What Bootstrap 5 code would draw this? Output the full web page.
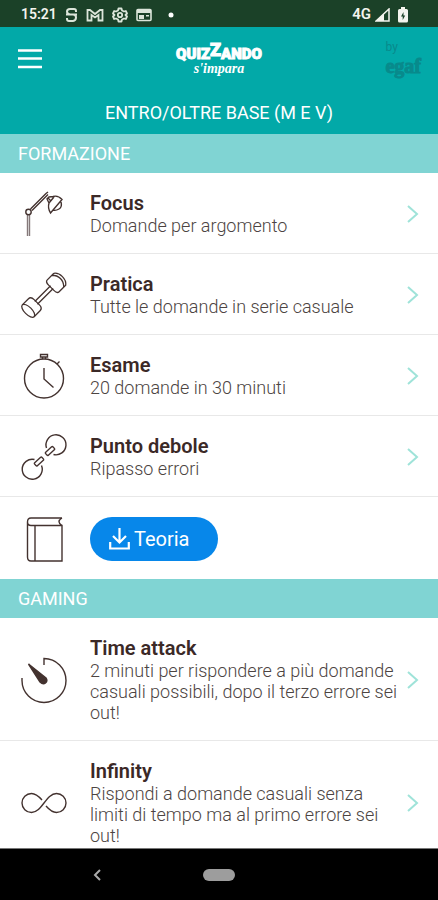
<!DOCTYPE html>
<html lang="it">
<head>
<meta charset="utf-8">
<meta name="viewport" content="width=device-width, initial-scale=1">
<title>Quizzando</title>
<link href="https://cdn.jsdelivr.net/npm/bootstrap@5.3.0/dist/css/bootstrap.min.css" rel="stylesheet">
<style>
  body { font-family: Roboto, "Liberation Sans", sans-serif; background: #fff; }
  svg { display: block; flex: none; }
  .status-bar { background: #1b4128; color: #f4f4ee; height: 27px; padding: 2px 30px 0 21px; font-size: 15px; font-weight: 600; }
  .clock { font-size: 14px; }
  .app-header { background: #02a9a8; color: #fff; }
  .header-row { display: grid; grid-template-columns: 1fr auto 1fr; height: 64px; padding: 0 17px; }
  .brand { line-height: 1; font-weight: 900; }
  .brand-name { line-height: 18px; -webkit-text-stroke: 1px #fff; font-size: 15px; }
  .brand-name .big-z { font-size: 18px; position: relative; top: -3px; }
  .brand-sub { font: italic bold 14px/12px "Liberation Serif", serif; }
  .publisher { color: #088a8c; }
  .publisher-by { font-size: 12px; line-height: 14px; }
  .publisher-name { font: bold 20px/24px "Liberation Serif", serif; -webkit-text-stroke: 1px #088a8c; }
  .course { font-size: 18px; line-height: 21px; font-weight: 400; padding: 11px 0; }
  .section-title { background: #80d4d3; color: #fff; font-size: 18px; line-height: 21px; font-weight: 400; padding: 9px 18px; }
  .menu-list .list-group-item { padding: 18px 18px 17px 20px; border-color: #e8e8e8; background: #fff; }
  .menu-list .list-group-item.no-arrow { padding-top: 20px; padding-bottom: 18px; }
  .menu-icon { width: 48px; height: 48px; fill: none; stroke: #43322f; stroke-width: 1.4; margin: -3px 22px -3px 0; }
  .item-title { color: #3b2927; font-size: 20px; line-height: 24px; font-weight: 600; }
  .item-text { color: #4c4442; font-size: 18px; line-height: 21px; font-weight: 300; }
  .item-body { margin-right: 4px; min-width: 0; }
  .arrow { stroke: #9fe3d9; stroke-width: 2; fill: none; }
  .btn-theory { background: #0787ea; color: #fff; font-size: 20px; line-height: 24px; padding: 10px 28px 10px 19px; }
  .btn-theory:hover { background: #0679d2; color: #fff; }
  .system-nav { background: #000; height: 52px; display: grid; grid-template-columns: 1fr auto 1fr; border-top: 1px solid #777; }
  .back-button { margin-right: 97px; }
  .home-pill { width: 32px; height: 12px; border-radius: 6px; background: #9d9d9d; }
</style>
<script src="https://cdn.jsdelivr.net/npm/bootstrap@5.3.0/dist/js/bootstrap.bundle.min.js"></script>
</head>
<body class="d-flex flex-column vh-100 overflow-hidden">

<div class="status-bar d-flex align-items-center flex-shrink-0">
  <span class="clock">15:21</span>
  <svg class="ms-2" width="13" height="16" viewBox="0 0 13 16" fill="none" stroke="#dce5da" stroke-width="2"><path d="M11 5V4Q11 2 9 2H5Q2 2 2 4.500T5 7.500H8Q11 7.500 11 10.500T8 14H4Q2 14 2 12V11M1 7.500H12"/></svg>
  <svg class="ms-2 me-1" width="18" height="14" viewBox="0 0 18 14" fill="none" stroke="#dce5da" stroke-width="1.800"><path d="M1.500 12.500V2H4L9 6L14 2H16.500V12.500H12.500V7L9 9.500L5.500 7V12.500Z"/></svg>
  <svg class="ms-1" width="16" height="16" viewBox="0 0 16 16" fill="none" stroke="#dce5da"><path stroke-width="1.800" stroke-linejoin="round" d="M6.500 1.500H9.500L10 3.500L12 4.500L13.800 4L15 6.500L13.500 8L15 9.500L13.800 12L12 11.500L10 12.500L9.500 14.500H6.500L6 12.500L4 11.500L2.200 12L1 9.500L2.500 8L1 6.500L2.200 4L4 4.500L6 3.500Z"/><circle cx="8" cy="8" r="2.200" stroke-width="1.800"/></svg>
  <svg class="ms-2" width="16" height="14" viewBox="0 0 16 14"><rect x="1" y="1.500" width="14" height="11" rx="1" fill="none" stroke="#dce5da" stroke-width="1.600"/><path fill="#dce5da" d="M1 1H15V5H1ZM3 7H8V11H3ZM10 7H13V8.500H10Z"/></svg>
  <svg class="ms-3" width="6" height="6" viewBox="0 0 6 6"><circle cx="3" cy="3" r="2.500" fill="#fff"/></svg>
  <span class="ms-auto">4G</span>
  <svg class="ms-1" width="15" height="14" viewBox="0 0 15 14"><path d="M14 1V13H1Z" fill="none" stroke="#f4f4ee" stroke-width="1.500"/><path d="M9 5.500V13H1Z" fill="#f4f4ee"/></svg>
  <svg class="ms-2" width="10" height="16" viewBox="0 0 10 16"><path fill="#f4f4ee" d="M3 0H7V2H8.500Q10 2 10 3.500V14Q10 15.500 8.500 15.500H1.500Q0 15.500 0 14V3.500Q0 2 1.500 2H3Z"/><path fill="#1b4128" d="M5.500 5L3 9.500H4.700V13L7.200 8.500H5.500Z"/></svg>
</div>

<header class="app-header flex-shrink-0">
  <div class="header-row align-items-center">
    <button type="button" class="btn border-0 p-0 text-start" aria-label="Menu">
      <svg width="26" height="22" viewBox="0 0 26 22" stroke="#fff" stroke-width="2.600"><path d="M1 2.500H25M1 10.500H25M1 19H25"/></svg>
    </button>
    <div class="brand text-center">
      <div class="brand-name">QUIZ<span class="big-z">Z</span>ANDO</div>
      <div class="brand-sub">s'impara</div>
    </div>
    <div class="publisher ms-auto">
      <div class="publisher-by">by</div>
      <div class="publisher-name">egaf</div>
    </div>
  </div>
  <h1 class="course text-center m-0">ENTRO/OLTRE BASE (M E V)</h1>
</header>

<main class="flex-grow-1 overflow-hidden">
  <h2 class="section-title m-0">FORMAZIONE</h2>
  <div class="menu-list list-group list-group-flush">
    <a href="#focus" class="list-group-item d-flex align-items-center">
      <svg class="menu-icon" viewBox="0 0 48 48"><path stroke="#85797a" d="M7.500 25V46M9.500 25V46"/><path d="M10.500 19L26 3.500M12 20.500L28 4.500M26 3.500L28 2M28 8L31 11"/><circle cx="8.500" cy="22" r="2.700"/><path d="M29 7L33 6.500Q38 5 42 9.500L30.500 23Q27.500 18 29 13L27 9ZM29 13L34 7M41 12Q42.500 17 39 19T33 20"/></svg>
      <div class="item-body flex-grow-1"><div class="item-title">Focus</div><div class="item-text">Domande per argomento</div></div>
      <svg class="arrow" width="14" height="18" viewBox="0 0 14 18"><path d="M2 1L11 9L2 17"/></svg>
    </a>
    <a href="#pratica" class="list-group-item d-flex align-items-center">
      <svg class="menu-icon" viewBox="0 0 48 48"><g transform="translate(24 24) rotate(-45) scale(.93)"><path d="M-12 -2H12M-12 2H12"/><path d="M-24 -9H-15Q-11 -9 -11 -4V4Q-11 9 -15 9H-24"/><ellipse cx="-24" cy="0" rx="4" ry="9"/><path d="M24 -9H14Q11 -9 11 -4V4Q11 9 14 9H24Q28 6 28 0T24 -9M21 -9Q25 -5 25 0T21 9"/></g></svg>
      <div class="item-body flex-grow-1"><div class="item-title">Pratica</div><div class="item-text">Tutte le domande in serie casuale</div></div>
      <svg class="arrow" width="14" height="18" viewBox="0 0 14 18"><path d="M2 1L11 9L2 17"/></svg>
    </a>
    <a href="#esame" class="list-group-item d-flex align-items-center">
      <svg class="menu-icon" viewBox="0 0 48 48"><circle cx="24" cy="26.500" r="19.500"/><path d="M24 16V27L33.500 35.500M20.500 2.500H27.500V5H20.500ZM22.500 5V7M25.500 5V7M37 12L39.500 9.500"/></svg>
      <div class="item-body flex-grow-1"><div class="item-title">Esame</div><div class="item-text">20 domande in 30 minuti</div></div>
      <svg class="arrow" width="14" height="18" viewBox="0 0 14 18"><path d="M2 1L11 9L2 17"/></svg>
    </a>
    <a href="#punto-debole" class="list-group-item d-flex align-items-center">
      <svg class="menu-icon" viewBox="0 0 48 48"><path d="M26.500 15A10 10 0 1 1 33.500 21.500M21.500 32.500A10 10 0 1 1 14.500 26.500"/><rect x="-5" y="-2" width="10" height="4" rx="1" transform="translate(30 18) rotate(-42)"/><rect x="-5" y="-2" width="10" height="4" rx="1" transform="translate(19 28.500) rotate(-42)"/></svg>
      <div class="item-body flex-grow-1"><div class="item-title">Punto debole</div><div class="item-text">Ripasso errori</div></div>
      <svg class="arrow" width="14" height="18" viewBox="0 0 14 18"><path d="M2 1L11 9L2 17"/></svg>
    </a>
    <div class="list-group-item no-arrow d-flex align-items-center">
      <svg class="menu-icon" viewBox="0 0 48 48"><path d="M42 3H11Q7.500 3 7.500 7V42Q7.500 46 11 46H42V10.500H11Q7.500 10.500 7.500 7M15 10.500V46M42 3Q36 6.500 42 10.500"/></svg>
      <button type="button" class="btn btn-theory rounded-pill border-0 d-flex align-items-center gap-1">
        <svg width="21" height="22" viewBox="0 0 21 22" fill="none" stroke="#fff" stroke-width="2.200"><path d="M10.500 0V14M4 8L10.500 14.500L17 8M1.200 14V20.500H19.800V14"/></svg>
        Teoria
      </button>
    </div>
  </div>

  <h2 class="section-title m-0">GAMING</h2>
  <div class="menu-list list-group list-group-flush">
    <a href="#time-attack" class="list-group-item d-flex align-items-center">
      <svg class="menu-icon" viewBox="0 0 48 48"><path d="M24 9V2.500A22 22 0 1 1 2 24.500V22"/><path d="M8.500 8L26 22Q28 25 25.500 27T20 26Z" fill="#43322f" stroke="#43322f"/></svg>
      <div class="item-body flex-grow-1"><div class="item-title">Time attack</div><div class="item-text">2 minuti per rispondere a più domande casuali possibili, dopo il terzo errore sei out!</div></div>
      <svg class="arrow" width="14" height="18" viewBox="0 0 14 18"><path d="M2 1L11 9L2 17"/></svg>
    </a>
    <a href="#infinity" class="list-group-item d-flex align-items-center">
      <svg class="menu-icon" viewBox="0 0 48 48"><path d="M22 21C18 16.500 15.500 14.500 11.500 14.500A9.300 9.300 0 0 0 11.500 33.500C22 33.500 26 14.500 36.500 14.500A9.300 9.300 0 0 1 36.500 33.500C32.500 33.500 30 31.500 26 27"/></svg>
      <div class="item-body flex-grow-1"><div class="item-title">Infinity</div><div class="item-text">Rispondi a domande casuali senza limiti di tempo ma al primo errore sei out!</div></div>
      <svg class="arrow" width="14" height="18" viewBox="0 0 14 18"><path d="M2 1L11 9L2 17"/></svg>
    </a>
  </div>
</main>

<nav class="system-nav align-items-center flex-shrink-0" aria-label="Sistema">
  <button type="button" class="btn border-0 p-1 ms-auto back-button" aria-label="Indietro">
    <svg width="10" height="12" viewBox="0 0 10 12" fill="none" stroke="#aaa" stroke-width="2"><path d="M8 1L3 6L8 11"/></svg>
  </button>
  <button type="button" class="btn border-0 p-0 home-pill" aria-label="Home"></button>
</nav>
</body>
</html>
